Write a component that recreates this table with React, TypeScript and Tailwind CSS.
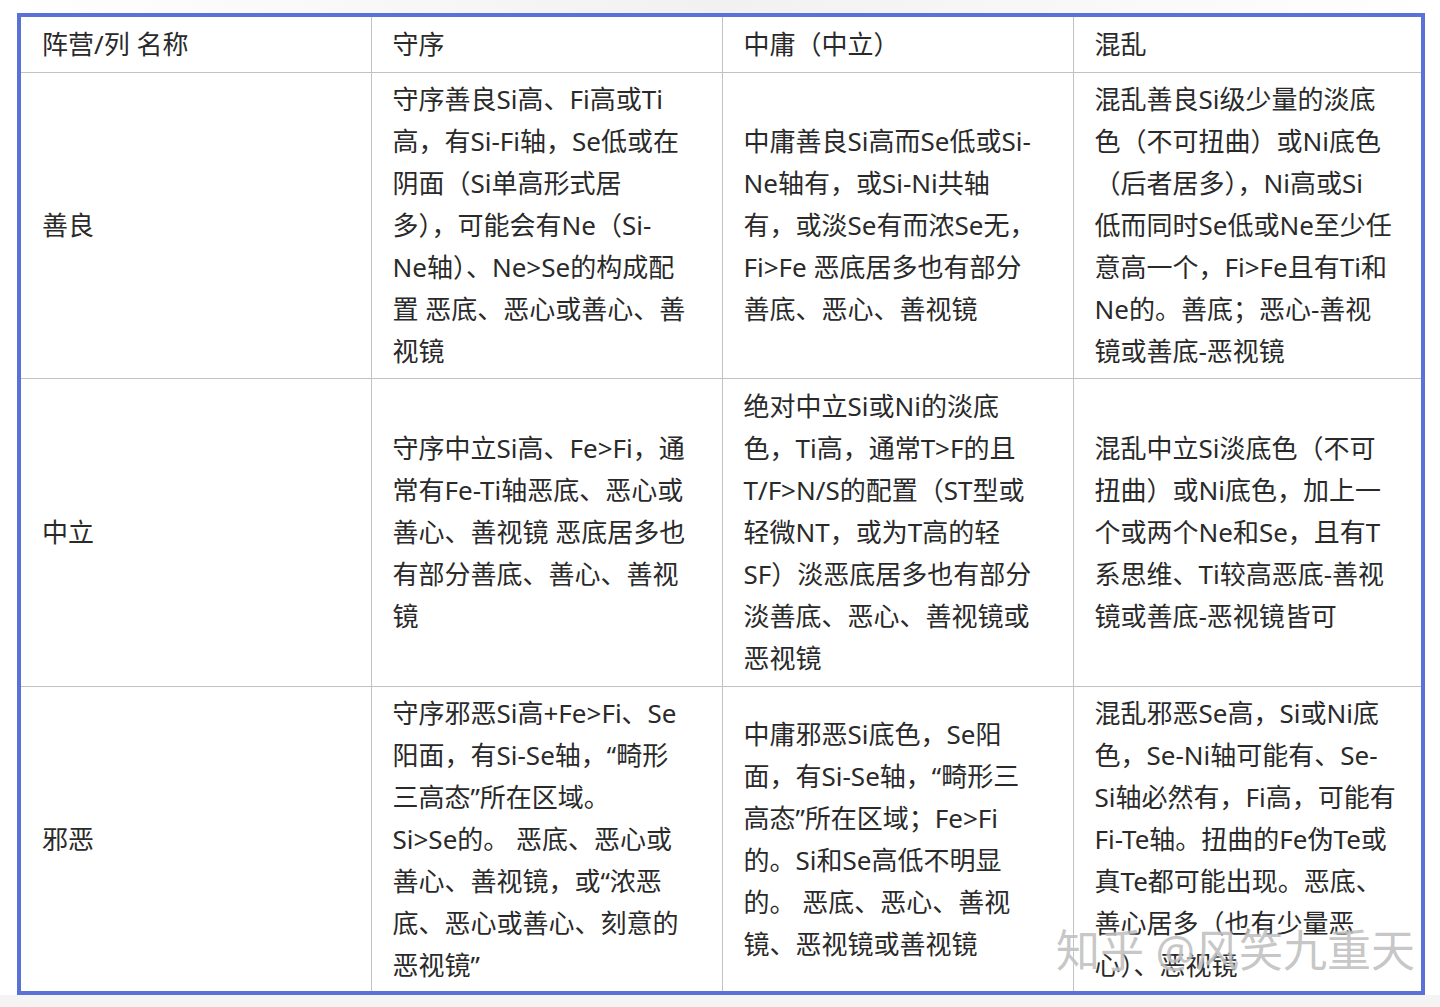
import React from "react";

const HEAD = ["阵营/列 名称", "守序", "中庸（中立）", "混乱"];

const ROWS: { name: string; h: string; cells: string[][] }[] = [
  {
    name: "善良",
    h: "h-[306px]",
    cells: [
      [
        "守序善良Si高、Fi高或Ti",
        "高，有Si-Fi轴，Se低或在",
        "阴面（Si单高形式居",
        "多），可能会有Ne（Si-",
        "Ne轴）、Ne>Se的构成配",
        "置 恶底、恶心或善心、善",
        "视镜",
      ],
      [
        "中庸善良Si高而Se低或Si-",
        "Ne轴有，或Si-Ni共轴",
        "有，或淡Se有而浓Se无，",
        "Fi>Fe 恶底居多也有部分",
        "善底、恶心、善视镜",
      ],
      [
        "混乱善良Si级少量的淡底",
        "色（不可扭曲）或Ni底色",
        "（后者居多），Ni高或Si",
        "低而同时Se低或Ne至少任",
        "意高一个，Fi>Fe且有Ti和",
        "Ne的。善底；恶心-善视",
        "镜或善底-恶视镜",
      ],
    ],
  },
  {
    name: "中立",
    h: "h-[308px]",
    cells: [
      [
        "守序中立Si高、Fe>Fi，通",
        "常有Fe-Ti轴恶底、恶心或",
        "善心、善视镜 恶底居多也",
        "有部分善底、善心、善视",
        "镜",
      ],
      [
        "绝对中立Si或Ni的淡底",
        "色，Ti高，通常T>F的且",
        "T/F>N/S的配置（ST型或",
        "轻微NT，或为T高的轻",
        "SF）淡恶底居多也有部分",
        "淡善底、恶心、善视镜或",
        "恶视镜",
      ],
      [
        "混乱中立Si淡底色（不可",
        "扭曲）或Ni底色，加上一",
        "个或两个Ne和Se，且有T",
        "系思维、Ti较高恶底-善视",
        "镜或善底-恶视镜皆可",
      ],
    ],
  },
  {
    name: "邪恶",
    h: "h-[305px]",
    cells: [
      [
        "守序邪恶Si高+Fe>Fi、Se",
        "阳面，有Si-Se轴，“畸形",
        "三高态”所在区域。",
        "Si>Se的。 恶底、恶心或",
        "善心、善视镜，或“浓恶",
        "底、恶心或善心、刻意的",
        "恶视镜”",
      ],
      [
        "中庸邪恶Si底色，Se阳",
        "面，有Si-Se轴，“畸形三",
        "高态”所在区域；Fe>Fi",
        "的。Si和Se高低不明显",
        "的。 恶底、恶心、善视",
        "镜、恶视镜或善视镜",
      ],
      [
        "混乱邪恶Se高，Si或Ni底",
        "色，Se-Ni轴可能有、Se-",
        "Si轴必然有，Fi高，可能有",
        "Fi-Te轴。扭曲的Fe伪Te或",
        "真Te都可能出现。恶底、",
        "善心居多（也有少量恶",
        "心）、恶视镜",
      ],
    ],
  },
];

const Lines: React.FC<{ lines: string[] }> = ({ lines }) => (
  <>
    {lines.map((l, i) => (
      <div key={i} className="whitespace-nowrap">
        {l}
      </div>
    ))}
  </>
);

export default function App() {
  return (
    <div
      className="relative w-[1440px] h-[1007px] bg-white overflow-hidden text-[#2a2a2a]"
      style={{ fontFamily: '"Noto Sans", "Noto Sans CJK SC", sans-serif' }}
    >
      {/* top strip */}
      <div className="h-[13px] bg-gradient-to-r from-white via-[#f1f1f1] to-white" />

      <div className="ml-[17px] w-[1408px] border-4 border-[#5a72d8] bg-white">
        <table className="w-full table-fixed border-collapse text-[26px] leading-[42px]">
          <colgroup>
            <col className="w-[350px]" />
            <col className="w-[351px]" />
            <col className="w-[351px]" />
            <col className="w-[348px]" />
          </colgroup>
          <thead>
            <tr className="h-[55px]">
              {HEAD.map((h) => (
                <th
                  key={h}
                  className="px-[21px] text-left font-normal align-middle border-l border-[#c2c2c2] first:border-l-0"
                >
                  {h}
                </th>
              ))}
            </tr>
          </thead>
          <tbody>
            {ROWS.map((r) => (
              <tr key={r.name} className={`${r.h} border-t border-[#c2c2c2]`}>
                <td className="px-[21px] align-middle">{r.name}</td>
                {r.cells.map((c, i) => (
                  <td key={i} className="px-[21px] align-middle border-l border-[#c2c2c2]">
                    <Lines lines={c} />
                  </td>
                ))}
              </tr>
            ))}
          </tbody>
        </table>
      </div>

      {/* bottom strip */}
      <div className="h-[12px] bg-[#f4f4f4]" />

      {/* watermark */}
      <div
        className="absolute left-[1056px] top-[922px] text-[44px] leading-[56px] whitespace-nowrap text-[rgba(150,150,150,0.55)]"
        style={{ textShadow: "0 0 2px rgba(255,255,255,0.9)" }}
      >
        知乎 @风笑九重天
      </div>
    </div>
  );
}
